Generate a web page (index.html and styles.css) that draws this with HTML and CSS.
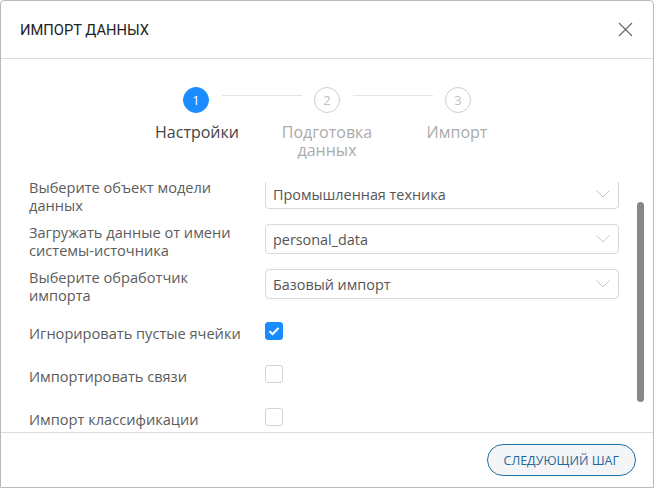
FILE: index.html
```html
<!DOCTYPE html>
<html lang="ru">
<head>
    <meta charset="UTF-8">
    <title>Импорт данных</title>
    <link rel="stylesheet" href="styles.css">
</head>
<body>

    <div class="dialog">
        <div class="dialog-header">
            <h1 class="dialog-title">Импорт данных</h1>
            <svg class="close-icon" width="15" height="15" viewBox="0 0 15 15">
                <path d="M1 1 L14 14 M14 1 L1 14" stroke="#6a6a6a" stroke-width="1.2" fill="none"/>
            </svg>
        </div>

        <div class="steps">
            <div class="steps-track">
                <div class="step-dot active">1</div>
                <div class="step-line"></div>
                <div class="step-dot">2</div>
                <div class="step-line"></div>
                <div class="step-dot">3</div>
            </div>
            <div class="steps-labels">
                <div class="step-label active">Настройки</div>
                <div class="step-label">Подготовка данных</div>
                <div class="step-label">Импорт</div>
            </div>
        </div>

        <div class="form-area">
            <div class="form">
                <div class="field">
                    <label class="field-label">Выберите объект модели данных</label>
                    <div class="select">
                        <span>Промышленная техника</span>
                        <svg class="chevron" width="14" height="8" viewBox="0 0 14 8"><path d="M0.5 0.5 L7 7 L13.5 0.5" stroke="#c4c4c4" fill="none"/></svg>
                    </div>
                </div>
                <div class="field">
                    <label class="field-label">Загружать данные от имени системы-источника</label>
                    <div class="select">
                        <span>personal_data</span>
                        <svg class="chevron" width="14" height="8" viewBox="0 0 14 8"><path d="M0.5 0.5 L7 7 L13.5 0.5" stroke="#c4c4c4" fill="none"/></svg>
                    </div>
                </div>
                <div class="field">
                    <label class="field-label">Выберите обработчик импорта</label>
                    <div class="select">
                        <span>Базовый импорт</span>
                        <svg class="chevron" width="14" height="8" viewBox="0 0 14 8"><path d="M0.5 0.5 L7 7 L13.5 0.5" stroke="#c4c4c4" fill="none"/></svg>
                    </div>
                </div>

                <div class="check-row">
                    <span class="field-label">Игнорировать пустые ячейки</span>
                    <span class="checkbox checked">
                        <svg width="18" height="18" viewBox="0 0 18 18"><path d="M4.5 9.2 L7.6 12.2 L13.5 6" stroke="#fff" stroke-width="2" fill="none"/></svg>
                    </span>
                </div>
                <div class="check-row">
                    <span class="field-label">Импортировать связи</span>
                    <span class="checkbox"></span>
                </div>
                <div class="check-row">
                    <span class="field-label">Импорт классификации</span>
                    <span class="checkbox"></span>
                </div>
            </div>
            <div class="scroll-thumb"></div>
        </div>

        <div class="dialog-footer">
            <button class="next-button">Следующий шаг</button>
        </div>
    </div>

</body>
</html>
```

FILE: styles.css
```css
body {
    margin: 0;
    font-family: "Open Sans", Arial, sans-serif;
    background: #fff;
}
.dialog {
    width: 654px;
    height: 488px;
    box-sizing: border-box;
    border: 1px solid #b9b9b9;
    border-radius: 4px 4px 0 0;
    display: flex;
    flex-direction: column;
    background: #fff;
}
.dialog-header {
    height: 57px;
    border-bottom: 1px solid #dcdcdc;
    display: flex;
    align-items: center;
    justify-content: space-between;
    padding: 0 20px 0 19px;
}
.dialog-title {
    margin: 0;
    font-family: Roboto, Arial, sans-serif;
    font-size: 14.7px;
    font-weight: 400;
    color: #222;
    text-transform: uppercase;
}
.close-icon { display: block; margin-top: -1px; }

.steps { padding: 28px 0 23px; }
.steps-track {
    width: 288px;
    margin: 0 auto;
    display: flex;
    align-items: flex-start;
}
.step-dot {
    width: 26px;
    height: 26px;
    box-sizing: border-box;
    border-radius: 50%;
    border: 1px solid #cfcfcf;
    color: #c0c0c0;
    font-size: 13px;
    line-height: 24px;
    text-align: center;
}
.step-dot.active {
    background: #1a8cff;
    border-color: #1a8cff;
    color: #fff;
}
.step-line {
    flex: 1;
    height: 1px;
    background: #e4e4e4;
    margin: 8px 12px 0 13px;
}
.steps-labels {
    width: 390px;
    margin: 10px auto 0;
    display: grid;
    grid-template-columns: 130px 130px 130px;
}
.step-label {
    padding: 0 18px;
    text-align: center;
    font-size: 16px;
    line-height: 18px;
    color: #ababab;
}
.step-label.active { color: #444; }

.form-area {
    flex: 1;
    overflow: hidden;
    position: relative;
}
.form {
    display: flex;
    flex-direction: column;
    margin-top: -4px;
    padding-left: 28px;
}
.field {
    display: grid;
    grid-template-columns: 220px 354px;
    column-gap: 16px;
    align-items: start;
    margin-bottom: 9px;
}
.field-label {
    font-size: 14.6px;
    line-height: 18px;
    color: #5c5c5c;
}
.select {
    height: 30px;
    margin-top: 1px;
    box-sizing: border-box;
    border: 1px solid #d9d9d9;
    border-radius: 4px;
    display: flex;
    align-items: center;
    justify-content: space-between;
    padding: 0 8px 0 7px;
    font-size: 14.4px;
    color: #555;
}
.chevron { display: block; }
.check-row {
    display: grid;
    grid-template-columns: 220px 18px;
    column-gap: 16px;
    align-items: start;
    margin-top: 11px;
    margin-bottom: 14px;
}
.checkbox {
    display: block;
    width: 18px;
    height: 18px;
    margin-top: -2px;
    box-sizing: border-box;
    border: 1px solid #d4d4d4;
    border-radius: 3px;
    background: #fff;
}
.checkbox svg { display: block; margin: -1px; }
.checkbox.checked { background: #1a8cff; border-color: #1a8cff; }
.scroll-thumb {
    position: absolute;
    top: 20px;
    right: 9px;
    width: 7px;
    height: 200px;
    border-radius: 4px;
    background: #888;
}

.dialog-footer {
    height: 54px;
    border-top: 1px solid #dcdcdc;
    display: flex;
    align-items: center;
    justify-content: flex-end;
    padding-right: 17px;
}
.next-button {
    height: 32px;
    padding: 0 16px;
    border: 1px solid #1d6fa5;
    border-radius: 16px;
    background: #f4f5f6;
    color: #22699a;
    font-family: "Open Sans", Arial, sans-serif;
    font-size: 12.5px;
    text-transform: uppercase;
}
```
